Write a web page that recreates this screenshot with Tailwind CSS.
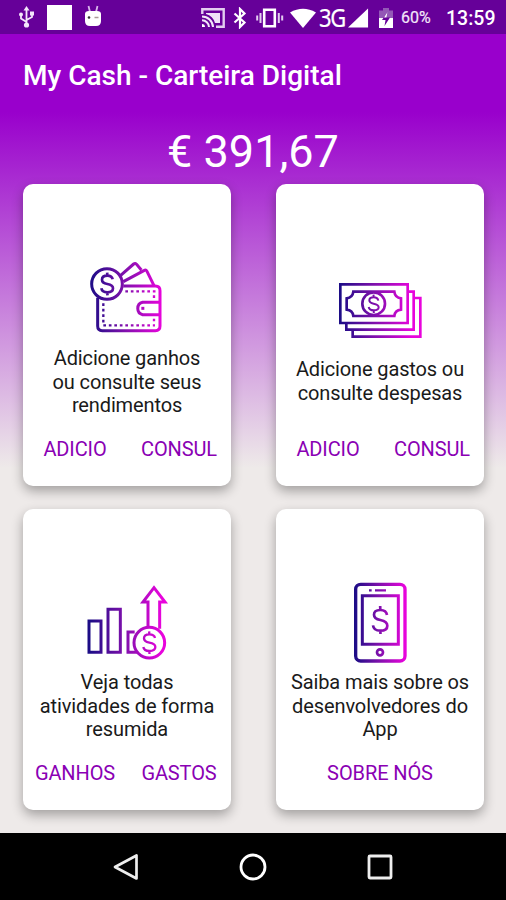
<!DOCTYPE html>
<html lang="pt">
<head>
<meta charset="utf-8">
<title>My Cash - Carteira Digital</title>
<script src="https://cdn.jsdelivr.net/npm/@tailwindcss/browser@4"></script>
</head>
<body class="w-[506px] h-[900px] overflow-hidden font-['Roboto',sans-serif]">
<svg class="absolute w-0 h-0" aria-hidden="true">
  <defs>
    <linearGradient id="g1" gradientUnits="userSpaceOnUse" x1="30" y1="0" x2="245" y2="0"><stop offset="0" stop-color="#1c0c86"/><stop offset=".5" stop-color="#8310ae"/><stop offset="1" stop-color="#e804dc"/></linearGradient>
    <linearGradient id="g2" gradientUnits="userSpaceOnUse" x1="45" y1="0" x2="195" y2="0"><stop offset="0" stop-color="#1c0c86"/><stop offset=".5" stop-color="#8310ae"/><stop offset="1" stop-color="#e804dc"/></linearGradient>
  </defs>
</svg>
<div class="flex flex-col h-full bg-[linear-gradient(to_bottom,#9900cc_0px,#9900cc_112px,#eeeae9_468px,#eeeae9_900px)]">
  <header class="flex items-center h-[34px] shrink-0 bg-[#660099] text-white">
    <svg class="ml-[18px] w-[17px] h-[22px] shrink-0" viewBox="0 0 17 22" fill="none" stroke="#f3e6fa" stroke-width="1.8"><path d="M8.500 3V19M8.500 16 3 12.500V9M8.500 14 14 11V8"/><path d="M8.500 0 5.500 4.500h6z" fill="#f3e6fa" stroke="none"/><circle cx="8.500" cy="19" r="2.600" fill="#f3e6fa" stroke="none"/><circle cx="3" cy="8.500" r="2" fill="#f3e6fa" stroke="none"/><path d="M12 5.500h4v4h-4z" fill="#f3e6fa" stroke="none"/></svg>
    <div class="ml-3 mt-px w-[25px] h-[25px] shrink-0 bg-white"></div>
    <svg class="ml-[12px] mb-[2px] w-[18px] h-[22px] shrink-0" viewBox="0 0 18 22"><path d="M4.500 1 6 7M13.500 1 12 7" stroke="#d9b8ec" stroke-width="1.800"/><path d="M1 9q0-3 4-3h8q4 0 4 3v7q0 5-5 5H6q-5 0-5-5z" fill="#fff"/><circle cx="5" cy="12.500" r="1.300" fill="#333"/><path d="M10.500 12.500h4" stroke="#a99" stroke-width="1.500"/></svg>
    <svg class="ml-[99px] mt-px w-[24px] h-[20px] shrink-0" viewBox="0 0 24 20" fill="none" stroke="#f3e6fa"><path d="M1.300 6V1.300h21.400v17.400H15" stroke-width="2.400" stroke="#e3cdf0"/><path d="M5 5h14v10h-5Q12 8 5 6z" fill="#f0e2f8" stroke="none"/><path d="M1 8.500A11 11 0 0 1 12 19M1 12.300A7 7 0 0 1 8 19" stroke-width="2"/><path d="M1 16a3 3 0 0 1 3 3H1z" fill="#fff" stroke="none"/></svg>
    <svg class="ml-[8px] mt-px w-[14px] h-[22px] shrink-0" viewBox="0 0 14 22" fill="none" stroke="#fff" stroke-width="2.200"><path d="M1.500 6.500 11.500 15.500 7 20V2l4.500 4.500L1.500 15.500"/></svg>
    <svg class="ml-[9px] mt-px w-[28px] h-[20px] shrink-0" viewBox="0 0 28 20" fill="none" stroke="#fff" stroke-width="2.600"><path d="M8.200 1.800h10.600v16.400H8.200z"/><path d="M4.500 5v10M22.800 5v10M1.200 7.500v5M26.200 7.500v5" stroke="#e3cdf0" stroke-width="2"/></svg>
    <svg class="ml-[6px] mt-px w-[26px] h-[20px] shrink-0" viewBox="0 0 26 20"><path d="M0 4.500Q13-3 26 4.500L13 20z" fill="#fff"/></svg>
    <span class="ml-[3px] mt-px w-[26px] text-[25px] leading-none tracking-[-1.500px] font-['Noto_Sans',sans-serif] origin-left scale-x-[0.88] [-webkit-text-stroke:0.2px_white]">3G</span>
    <svg class="ml-[3px] mt-px w-[21px] h-[20px] shrink-0" viewBox="0 0 22 20"><path d="M21 0v20H0z" fill="#fff"/></svg>
    <svg class="ml-[10px] mt-px w-[14px] h-[20px] shrink-0" viewBox="0 0 14 20"><path d="M0 2.500h4V0h6v2.500h4V11H0z" fill="#9358b6"/><path d="M0 10h14v10H0z" fill="#fff"/><path d="M8.500 4 3 12h3.500L5.500 18 11 9.500H7.500z" fill="#660099"/><path d="M8.500 4 5 9.500H7.500z" fill="#fff"/></svg>
    <span class="ml-[8px] mt-[2px] w-[32px] text-[16px] leading-none text-[#f3e6fa] [-webkit-text-stroke:0.2px_#f3e6fa]">60%</span>
    <span class="ml-[13px] mt-[3px] text-[19.500px] leading-none font-medium">13:59</span>
  </header>
  <div class="h-[82px] shrink-0 pl-[23px] pt-px flex items-center text-white"><h1 class="text-[28px] font-medium leading-none whitespace-nowrap">My Cash - Carteira Digital</h1></div>
  <div class="h-[68px] shrink-0 pt-[2px] flex items-center justify-center text-white text-[45px] leading-none">€ 391,67</div>
  <main class="h-[649px] shrink-0 px-[23px] grid grid-cols-[208px_208px] grid-rows-[302px_301px] gap-x-[45px] gap-y-[23px] text-center text-[20px] leading-[23.500px] text-[#1a1a1a]">
    <section class="bg-white rounded-[10px] shadow-[0_5px_12px_rgba(0,0,0,0.32)] flex flex-col items-center pt-[66px] pb-[12px]">
      <svg class="w-[95px] h-[95px] shrink-0" viewBox="0 0 285 285" fill="none" stroke="url(#g1)" stroke-width="9">
        <circle cx="81" cy="102" r="46"/>
        <path d="M53 143V228q0 14 14 14H226q14 0 14-14V122q0-14-14-14H130M122 76 161 42q5-4 9 1l14 17M130 95 193 61q5-3 8 3l21 43" stroke-linejoin="round"/>
        <path d="M240 157H188a19 19 0 0 0 0 37h52"/>
        <path d="M136 124H228M70 160V226H225M222 136V150M222 206V220" stroke-dasharray="8 8.500" stroke-width="7"/>
        <path d="M184 175h9"/>
        <path d="M98 88Q96 77 82 77 66 77 66 89 66 99 82 102 99 105 99 115 99 127 82 127 66 127 64 115M81.500 68 82 77M82 127l.5 9" stroke-width="8"/>
      </svg>
      <p class="mt-[2px] tracking-[-0.130px] whitespace-nowrap">Adicione ganhos<br>ou consulte seus<br>rendimentos</p>
      <div class="mt-auto h-12 w-full grid grid-cols-2 items-center tracking-[-0.100px] text-[#8a00b4]"><span>ADICIO</span><span>CONSUL</span></div>
    </section>
    <section class="bg-white rounded-[10px] shadow-[0_5px_12px_rgba(0,0,0,0.32)] flex flex-col items-center pt-[86px] pb-[12px]">
      <svg class="w-[100px] h-[80px] shrink-0" viewBox="0 0 300 240" fill="none" stroke="url(#g1)" stroke-width="8">
        <path d="M31 43H233V159H31zM49 160V179H251V65H234M68 180V200H271V84H252"/>
        <path d="M70 65H193Q195 83 213 85V119Q195 121 193 138H70Q68 121 50 119V85Q68 83 70 65z"/>
        <circle cx="131" cy="101" r="34"/>
        <path d="M145 92Q143 82 131 82 118 82 118 91 118 99 131 101 146 104 146 112 146 121 131 121 118 121 116 111M130.500 74 131 82M131 121l.5 8" stroke-width="6"/>
      </svg>
      <p class="mt-[8px] tracking-[-0.130px] whitespace-nowrap">Adicione gastos ou<br>consulte despesas</p>
      <div class="mt-auto h-12 w-full grid grid-cols-2 items-center tracking-[-0.100px] text-[#8a00b4]"><span>ADICIO</span><span>CONSUL</span></div>
    </section>
    <section class="bg-white rounded-[10px] shadow-[0_5px_12px_rgba(0,0,0,0.32)] flex flex-col items-center pt-[71px] pb-[12px]">
      <svg class="w-[95px] h-[85px] shrink-0" viewBox="0 0 285 255" fill="none" stroke="url(#g1)" stroke-width="9">
        <path d="M27 123H63V217H27zM84 88H121V217H84zM164 156H144V217H172M204 143V66H189L222 23 255 66H239V146"/>
        <circle cx="208" cy="188" r="46"/>
        <path d="M225 174Q223 163 208 163 192 163 192 175 192 185 208 188 226 191 226 201 226 213 208 213 192 213 190 201M207.500 154 208 163M208 213l.5 9" stroke-width="7"/>
      </svg>
      <p class="mt-[6px] tracking-[-0.100px] whitespace-nowrap">Veja todas<br>atividades de forma<br>resumida</p>
      <div class="mt-auto h-12 w-full grid grid-cols-2 items-center tracking-[-0.100px] text-[#8a00b4]"><span>GANHOS</span><span>GASTOS</span></div>
    </section>
    <section class="bg-white rounded-[10px] shadow-[0_5px_12px_rgba(0,0,0,0.32)] flex flex-col items-center pt-[66px] pb-[12px]">
      <svg class="w-[80px] h-[95px] shrink-0" viewBox="0 0 240 285" fill="none" stroke="url(#g2)" stroke-width="10">
        <rect x="47" y="28" width="148" height="230" rx="15"/>
        <path d="M67 62H175V208H67z" stroke-width="9"/>
        <path d="M87 46h8M105 46l33 .1" stroke-width="7"/>
        <circle cx="120" cy="232" r="9" stroke-width="8"/>
        <path d="M141 120Q139 105 121 105 102 105 102 119 102 131 121 135 142 139 142 152 142 167 121 167 101 167 99 151M120.500 93 121 105M121 167l.5 10" stroke-width="8"/>
      </svg>
      <p class="mt-px tracking-[-0.100px] whitespace-nowrap">Saiba mais sobre os<br>desenvolvedores do<br>App</p>
      <div class="mt-auto h-12 w-full flex items-center justify-center tracking-[-0.100px] text-[#8a00b4]"><span>SOBRE NÓS</span></div>
    </section>
  </main>
  <nav class="relative grow bg-black flex items-center justify-center gap-[97px]">
    <svg class="w-[30px] h-[30px]" viewBox="0 0 30 30" fill="none" stroke="#eee" stroke-width="2.700" stroke-linejoin="round"><path d="M25.500 3.500v23L4 15z"/></svg>
    <svg class="w-[30px] h-[30px]" viewBox="0 0 30 30" fill="none" stroke="#fff" stroke-width="2.800"><circle cx="15" cy="15" r="12"/></svg>
    <svg class="w-[30px] h-[30px]" viewBox="0 0 30 30" fill="none" stroke="#eee" stroke-width="2.800"><rect x="4" y="4" width="22" height="22" rx="1"/></svg>
  </nav>
</div>
</body>
</html>
